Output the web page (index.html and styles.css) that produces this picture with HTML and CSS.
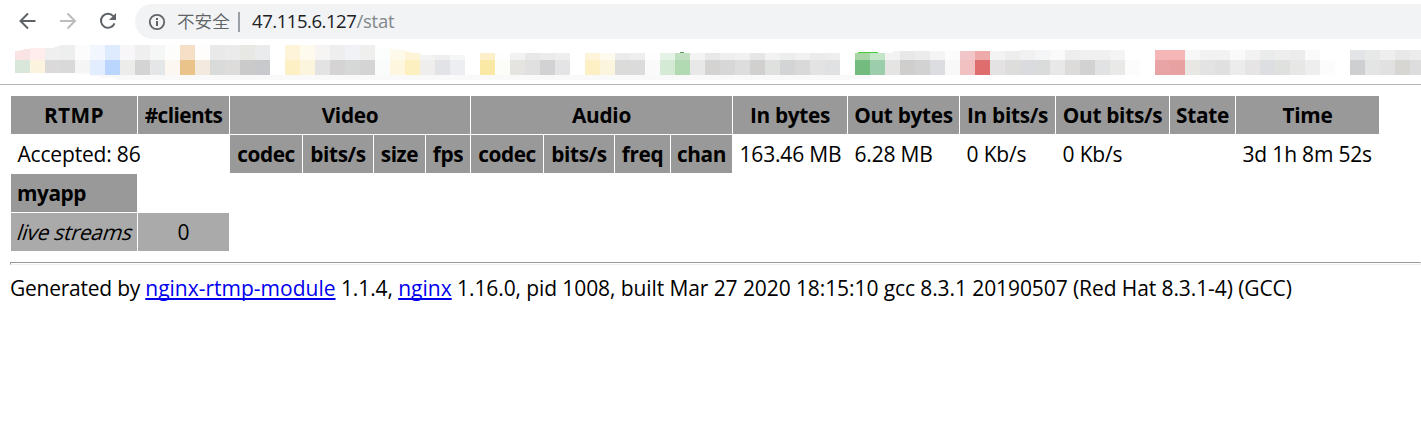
FILE: index.html
```
<!DOCTYPE html>
<html lang="en">
<head>
<meta charset="utf-8">
<title>RTMP statistics</title>
<link rel="stylesheet" href="styles.css">
</head>
<body>
<header class="toolbar">
  <svg class="nav" viewBox="0 0 135 42" aria-hidden="true">
    <g fill="none" stroke-width="2">
      <path stroke="#5f6368" d="M35.500 21H21M28 13.500 20.500 21l7.500 7.500"/>
      <path stroke="#babcbe" d="M60 21h14.500M67.500 13.500 75 21l-7.500 7.500"/>
      <path stroke="#5f6368" d="M113.300 16.200A7 7 0 1 0 114.500 23.300"/>
    </g>
    <path fill="#5f6368" d="M116 13v7h-7z"/>
  </svg>
  <div class="omnibox">
    <svg class="info" viewBox="0 0 18 18" aria-hidden="true">
      <circle cx="9" cy="9" r="7.200" fill="none" stroke="#5f6368" stroke-width="1.800"/>
      <path fill="#5f6368" d="M8 8h2v5H8zM8 5h2v2H8z"/>
    </svg>
    <span class="insecure" lang="zh">不安全</span>
    <span class="divider"></span>
    <span class="host">47.115.6.127</span><span class="path">/stat</span>
  </div>
</header>
<svg class="bookmarks" viewBox="0 42 1421 42" aria-hidden="true">
  <path fill="#f9f9f9" d="M75 73h796v6h-20v1H116v-2h-16v-2H90v-2H75z"/>
  <g>
    <path fill="#fae3e3" d="M15 51h5v-1h4v-1h6v11H15z"/>
    <rect x="30" y="48" fill="#ffeded"/><path fill="#efefef" d="M45 48h9v-1h3v-1h3v14H45z"/><rect x="60" y="45" fill="#edeeee"/>
    <rect x="75" y="45" fill="#fcfcfc"/><rect x="90" y="45" fill="#f2f7ff"/><rect x="105" y="45" fill="#deebff"/><rect x="120" y="45" fill="#f8f6f8"/>
    <rect x="135" y="45" fill="#efefef"/><rect x="150" y="45" fill="#f5f7f7"/><rect x="165" y="45" fill="#fdfdfb"/><rect x="180" y="45" fill="#f5dfc7"/>
    <rect x="195" y="45" fill="#fffdfc"/><rect x="210" y="45" fill="#e9e9e9"/><rect x="225" y="45" fill="#ebebeb"/><rect x="240" y="45" fill="#e7e7e4"/><rect x="255" y="45" fill="#eaebed"/>
    <rect x="285" y="45" fill="#fdf4da"/><rect x="300" y="45" fill="#fefaee"/><rect x="315" y="45" fill="#f6f5f4"/><rect x="330" y="45" fill="#eeeeee"/>
    <rect x="345" y="45" fill="#f0f2f5"/><rect x="360" y="45" fill="#efefed"/><rect x="375" y="47" fill="#fbfefd"/><path fill="#fefae9" d="M390 49h4v1h11v10h-15z"/>
    <path fill="#fdf4d7" d="M405 51h2v1h4v1h9v7h-15z"/><path fill="#f3f3f3" d="M420 54h2v1h13v5h-15z"/><rect x="435" y="55" fill="#eeeeee"/><rect x="450" y="55" fill="#f5f7f7"/>
    <rect x="480" y="53" fill="#fdf0c8"/><rect x="495" y="53" fill="#fefefe"/><rect x="510" y="53" fill="#f2f2f2"/><rect x="525" y="53" fill="#e8e8e8"/><rect x="540" y="53" fill="#ebebeb"/><rect x="555" y="53" fill="#eeeeee"/>
    <rect x="585" y="53" fill="#fdf4da"/><rect x="600" y="53" fill="#fefaee"/><rect x="615" y="53" fill="#ebebeb"/><rect x="630" y="53" fill="#eeeeee"/><rect x="645" y="53" fill="#fefefe"/>
    <rect x="660" y="53" fill="#e5f3e6"/><rect x="675" y="53" fill="#c1e0c1"/><rect x="690" y="53" fill="#f3f3f3"/><rect x="705" y="53" fill="#e8e8e8"/><rect x="720" y="53" fill="#eeeeee"/>
    <rect x="735" y="53" fill="#f1f1f1"/><rect x="750" y="53" fill="#e6e6e6"/><rect x="765" y="53" fill="#f2f2f2"/><rect x="780" y="53" fill="#ebeeec"/><rect x="795" y="53" fill="#f1f1f1"/><rect x="810" y="53" fill="#ebebeb"/><rect x="825" y="53" fill="#eeeeee"/>
    <rect x="855" y="53" fill="#a7d5a6"/><rect x="870" y="53" fill="#c2e6c7"/><path fill="#f3f3f3" d="M885 53h7v-1h2v-1h6v9h-15z"/><rect x="900" y="51" fill="#e8e8e8"/><rect x="915" y="51" fill="#ebebeb"/><rect x="930" y="51" fill="#f4f4f4"/><rect x="945" y="51" fill="#fcfcfc"/>
    <rect x="960" y="51" fill="#f2c5c9"/><rect x="975" y="51" fill="#edaaa9"/><rect x="990" y="51" fill="#f3f3f3"/><rect x="1005" y="51" fill="#ededed"/><rect x="1020" y="50" fill="#f1f1f1"/><rect x="1035" y="50" fill="#f4f5f7"/><rect x="1050" y="50" fill="#fafafa"/>
    <rect x="1065" y="50" fill="#eeeeee"/><rect x="1080" y="50" fill="#f0f0f0"/><rect x="1095" y="50" fill="#f0f0f0"/><rect x="1110" y="50" fill="#f4f4f4"/>
    <rect x="1155" y="50" fill="#f6b5b7"/><rect x="1170" y="50" fill="#f6b5b7"/><rect x="1185" y="50" fill="#f7f7f7"/><rect x="1200" y="50" fill="#f2f2f2"/><rect x="1215" y="50" fill="#f2f2f2"/><rect x="1230" y="50" fill="#fafafa"/><rect x="1245" y="50" fill="#f2f2f2"/>
    <rect x="1260" y="50" fill="#e9ecea"/><rect x="1275" y="50" fill="#eeeeee"/><rect x="1290" y="50" fill="#ececec"/><rect x="1305" y="50" fill="#fafafa"/>
    <rect x="1350" y="50" fill="#e2e4e8"/><rect x="1365" y="50" fill="#e7e9e8"/><rect x="1380" y="50" fill="#eeeeee"/><rect x="1395" y="50" fill="#e8e8e8"/><rect x="1410" y="50" fill="#ececec"/>
  </g>
  <g>
    <rect class="short" x="15" y="60" fill="#d9e7da"/><rect class="short" x="30" y="60" fill="#fcf3df"/><rect class="short" x="45" y="60" fill="#dbd9da"/><rect class="short" x="60" y="60" fill="#d9d9d9"/>
    <rect class="short" x="75" y="60" fill="#f5f5f5"/><rect x="90" y="60" fill="#e2eeff"/><rect x="105" y="60" fill="#bad6ff"/><rect x="120" y="60" fill="#ececeb"/>
    <rect x="135" y="60" fill="#d4d4d4"/><rect x="150" y="60" fill="#e5e6e8"/><rect x="165" y="60" fill="#fcf7f1"/><rect x="180" y="60" fill="#eac38b"/>
    <rect x="195" y="60" fill="#f4e9df"/><rect x="210" y="60" fill="#d8dbda"/><rect x="225" y="60" fill="#dddcda"/><rect x="240" y="60" fill="#cacaca"/><rect x="255" y="60" fill="#c8c9cd"/><rect x="270" y="60" fill="#ffffff"/>
    <rect x="285" y="60" fill="#fcf0c4"/><rect x="300" y="60" fill="#fcf5de"/><rect x="315" y="60" fill="#e3e3e4"/><rect x="330" y="60" fill="#d5d3d3"/>
    <rect x="345" y="60" fill="#d6d8d7"/><rect x="360" y="60" fill="#d4d4d4"/><rect x="375" y="60" fill="#fafcfb"/><rect x="390" y="60" fill="#fef6df"/>
    <rect x="405" y="60" fill="#fcefc0"/><rect x="420" y="60" fill="#efeeed"/><rect x="435" y="60" fill="#e2e3e6"/><rect x="450" y="60" fill="#edeef1"/><rect x="465" y="60" fill="#ffffff"/>
    <rect x="480" y="60" fill="#fae9a4"/><rect x="495" y="60" fill="#fcfcf9"/><rect x="510" y="60" fill="#e5e4e1"/><rect x="525" y="60" fill="#e0e0e0"/><rect x="540" y="60" fill="#d2d2d4"/><rect x="555" y="60" fill="#e4e4e6"/><rect x="570" y="60" fill="#ffffff"/>
    <rect x="585" y="60" fill="#fcf0c4"/><rect x="600" y="60" fill="#fcf5de"/><rect x="615" y="60" fill="#dbdbd9"/><rect x="630" y="60" fill="#dbdbdc"/><rect x="645" y="60" fill="#fafafa"/>
    <rect x="660" y="60" fill="#d4ead4"/><rect x="675" y="60" fill="#b1dab2"/><rect x="690" y="60" fill="#e8e8e8"/><rect x="705" y="60" fill="#d4d3d1"/><rect x="720" y="60" fill="#d7d7d7"/>
    <rect x="735" y="60" fill="#dddddd"/><rect x="750" y="60" fill="#d1d0ce"/><rect x="765" y="60" fill="#dfe1df"/><rect x="780" y="60" fill="#d3d4d6"/><rect x="795" y="60" fill="#d9d9d9"/><rect x="810" y="60" fill="#e3e3e3"/><rect x="825" y="60" fill="#e0e1e3"/>
    <rect x="840" y="60" fill="#ffffff"/><rect x="855" y="60" fill="#74bb7f"/><rect x="870" y="60" fill="#9ccead"/><rect x="885" y="60" fill="#e5e4e2"/><rect x="900" y="60" fill="#d0cdcd"/><rect x="915" y="60" fill="#d2d2d2"/><rect x="930" y="60" fill="#dbdde0"/><rect x="945" y="60" fill="#f8f8f8"/>
    <rect x="960" y="60" fill="#f1c0c1"/><rect x="975" y="60" fill="#e06d6d"/><rect x="990" y="60" fill="#e4e2e3"/><rect x="1005" y="60" fill="#dddddc"/><rect x="1020" y="60" fill="#d9dbde"/><rect x="1035" y="60" fill="#dadbdb"/><rect x="1050" y="60" fill="#e8e8e8"/>
    <rect x="1065" y="60" fill="#dcdbd9"/><rect x="1080" y="60" fill="#d2d2d2"/><rect x="1095" y="60" fill="#e0e2e4"/><rect x="1110" y="60" fill="#e9e9e7"/><rect x="1125" y="60" fill="#fcfcfc"/>
    <rect x="1155" y="60" fill="#e8a4a4"/><rect x="1170" y="60" fill="#e8a1a1"/><rect x="1185" y="60" fill="#e8e7e4"/><rect x="1200" y="60" fill="#e3e3e3"/><rect x="1215" y="60" fill="#e0e0e0"/><rect x="1230" y="60" fill="#ececec"/><rect x="1245" y="60" fill="#e7e4e5"/>
    <rect x="1260" y="60" fill="#dcdee1"/><rect x="1275" y="60" fill="#dfe1df"/><rect x="1290" y="60" fill="#e7e7e5"/><rect x="1305" y="60" fill="#eeeeee"/><rect x="1320" y="60" fill="#fcfcfc"/>
    <rect x="1350" y="60" fill="#cecfd1"/><rect x="1365" y="60" fill="#e3e5e4"/><rect x="1380" y="60" fill="#e1e1e1"/><rect x="1395" y="60" fill="#d8d6d3"/><rect x="1410" y="60" fill="#dddddd"/>
  </g>
  <path fill="#43cd35" d="M858 52h20v1h-20z"/><path fill="#5d9b5f" d="M680 52h4v1h-4z"/>
</svg>
<main class="content">
  <table class="stats">
    <colgroup><col class="c126"><col class="c91"><col class="c72"><col class="c70"><col class="c51"><col class="c44"><col class="c72"><col class="c70"><col class="c55"><col class="c61"><col class="c114"><col class="c111"><col class="c95"><col class="c113"><col class="c65"><col class="c143"></colgroup>
    <tr class="head"><th>RTMP</th><th>#clients</th><th colspan="4">Video</th><th colspan="4">Audio</th><th>In bytes</th><th>Out bytes</th><th>In bits/s</th><th>Out bits/s</th><th>State</th><th>Time</th></tr>
    <tr><td colspan="2">Accepted: 86</td><th>codec</th><th>bits/s</th><th>size</th><th>fps</th><th>codec</th><th>bits/s</th><th>freq</th><th>chan</th><td>163.46 MB</td><td>6.28 MB</td><td>0 Kb/s</td><td>0 Kb/s</td><td></td><td>3d 1h 8m 52s</td></tr>
    <tr><th class="app">myapp</th></tr>
    <tr class="live"><td><i>live streams</i></td><td class="count">0</td></tr>
  </table>
  <hr>
  <p class="footer"><span class="by">Generated by </span><a href="#">nginx-rtmp-module</a> 1.1.4, <a href="#">nginx</a> 1.16.0, pid 1008, built Mar 27 2020 18:15:10 gcc 8.3.1 20190507 (Red Hat 8.3.1-4) (GCC)</p>
</main>
</body>
</html>
```
FILE: styles.css
```
body {
  margin: 0;
  height: 447px;
  overflow: hidden;
  background: #fff;
  color: #000;
  font: 21px/30px "Open Sans", "Noto Sans", sans-serif;
}
.toolbar { display: flex; height: 42px; }
.nav { width: 135px; height: 42px; flex: none; }
.omnibox {
  display: flex;
  align-items: center;
  flex: 1;
  height: 35px;
  margin-top: 4px;
  padding-left: 13px;
  border-radius: 18px 0 0 18px;
  background: #f1f3f4;
  font-size: 18.500px;
}
.info { width: 18px; height: 18px; margin-right: 11px; }
.insecure { width: 60px; font: 350 17.600px/30px "Noto Sans CJK SC", sans-serif; color: #5f6368; white-space: nowrap; padding-bottom: 2px; }
.divider { width: 2px; height: 20px; margin-left: 1px; margin-right: 12px; background: #9aa0a6; }
.host, .path { padding-bottom: 2px; }
.host { color: #202124; letter-spacing: -.45px; }
.path { color: #80868b; letter-spacing: -.2px; }
.bookmarks { display: block; width: 1421px; height: 42px; border-bottom: 1px solid #b6b6b6; }
.bookmarks rect { width: 15px; height: 15px; }
.bookmarks .short { height: 13px; }
.content { padding: 10px 0 0 10px; }
.stats { width: 1370px; table-layout: fixed; border-spacing: 1px; }
.stats tr { height: 38px; }
.stats th, .stats td { padding: 0 0 0 6.500px; height: 38px; box-sizing: border-box; white-space: nowrap; text-align: left; letter-spacing: -.18px; }
.stats th { padding: 0; background: #999; text-align: center; font-size: 20.800px; letter-spacing: -.4px; }
.stats .head th { letter-spacing: -.3px; }
.stats .head th:first-child { letter-spacing: .4px; }
.stats .head th:nth-child(2) { letter-spacing: -.55px; }
.stats .app { padding-left: 6px; text-align: left; }
.live td { background: #aaa; }
.live i { display: inline-block; font-style: normal; letter-spacing: -.2px; transform: skewX(-18deg); }
.stats .count { padding: 0; text-align: center; }
.c126 { width: 126px; }
.c91 { width: 91px; }
.c72 { width: 72px; }
.c70 { width: 70px; }
.c51 { width: 51px; }
.c44 { width: 44px; }
.c55 { width: 55px; }
.c61 { width: 61px; }
.c114 { width: 114px; }
.c111 { width: 111px; }
.c95 { width: 95px; }
.c113 { width: 113px; }
.c65 { width: 65px; }
.c143 { width: 143px; }
hr { height: 1px; margin: 10px 0 8px; border: 1px solid; border-color: #999 #eee #eee #999; }
.footer { margin: 0; white-space: nowrap; letter-spacing: -.09px; }
.footer .by { letter-spacing: -.24px; }
.footer a { color: #00e; letter-spacing: 0; text-decoration: underline; text-decoration-skip-ink: none; }
```
